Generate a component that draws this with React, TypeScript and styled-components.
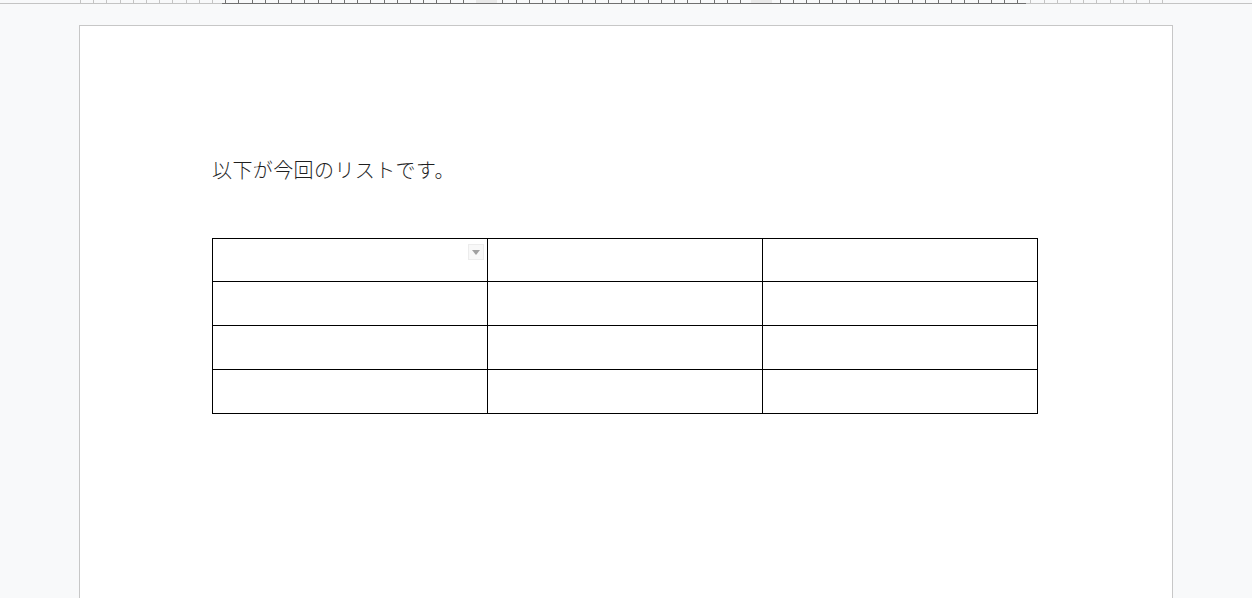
import React, { FC } from "react";
import styled, { createGlobalStyle } from "styled-components";

const GlobalStyle = createGlobalStyle`
  html, body {
    margin: 0;
    padding: 0;
    background: #f8f9fa;
    overflow: hidden;
  }
  body {
    font-family: "Noto Sans CJK JP", "Noto Sans", sans-serif;
  }
`;

const TICK = 13.2;

const Ruler: FC = () => {
  const ticks: number[] = [];
  for (let x = 80; x <= 1172; x += TICK) ticks.push(Math.round(x));
  return (
    <RulerSvg width="1252" height="4" viewBox="0 0 1252 4">
      <line x1="0" y1="3.5" x2="1252" y2="3.5" stroke="#c4c4c4" />
      <line x1="222" y1="3.5" x2="1026" y2="3.5" stroke="#707070" />
      {ticks.map((x) => (
        <line
          key={x}
          x1={x + 0.5}
          y1="0"
          x2={x + 0.5}
          y2="3"
          stroke={x >= 222 && x <= 1026 ? "#707070" : "#c4c4c4"}
        />
      ))}
      <rect x="476" y="0" width="21" height="3" fill="#e8e8e8" />
      <rect x="751" y="0" width="21" height="3" fill="#e8e8e8" />
    </RulerSvg>
  );
};

const rows = [0, 1, 2, 3];
const cols = [0, 1, 2];

const App: FC = () => {
  return (
    <>
      <GlobalStyle />
      <Ruler />
      <Page>
        <Paragraph>以下が今回のリストです。</Paragraph>
        <Table>
          <tbody>
            {rows.map((r) => (
              <tr key={r}>
                {cols.map((c) => (
                  <Cell key={c} $first={r === 0}>
                    {r === 0 && c === 0 && (
                      <DropButton>
                        <svg width="8" height="5" viewBox="0 0 8 5">
                          <path d="M0 0h8L4 5z" fill="#a0a0a0" />
                        </svg>
                      </DropButton>
                    )}
                  </Cell>
                ))}
              </tr>
            ))}
          </tbody>
        </Table>
      </Page>
    </>
  );
};

export default App;

const RulerSvg = styled.svg`
  display: block;
`;

const Page = styled.div`
  margin: 21px 0 0 79px;
  width: 1094px;
  height: 600px;
  background: #fff;
  border: 1px solid #c7c7c7;
  padding: 131px 0 0 132px;
  box-sizing: border-box;
`;

const Paragraph = styled.p`
  margin: 0 0 55px;
  font-size: 20px;
  line-height: 26px;
  color: #1f1f1f;
  font-weight: 300;
  letter-spacing: 0.4px;
`;

const Table = styled.table`
  border-collapse: collapse;
  width: 826px;
  table-layout: fixed;
`;

const Cell = styled.td<{ $first?: boolean }>`
  border: 1px solid #000;
  height: ${(p) => (p.$first ? "42px" : "43px")};
  padding: 0;
  position: relative;
`;

const DropButton = styled.div`
  position: absolute;
  top: 5px;
  right: 3px;
  width: 16px;
  height: 16px;
  border: 1px solid #ececec;
  background: #f8f8f8;
  display: flex;
  align-items: center;
  justify-content: center;
  box-sizing: border-box;
`;
